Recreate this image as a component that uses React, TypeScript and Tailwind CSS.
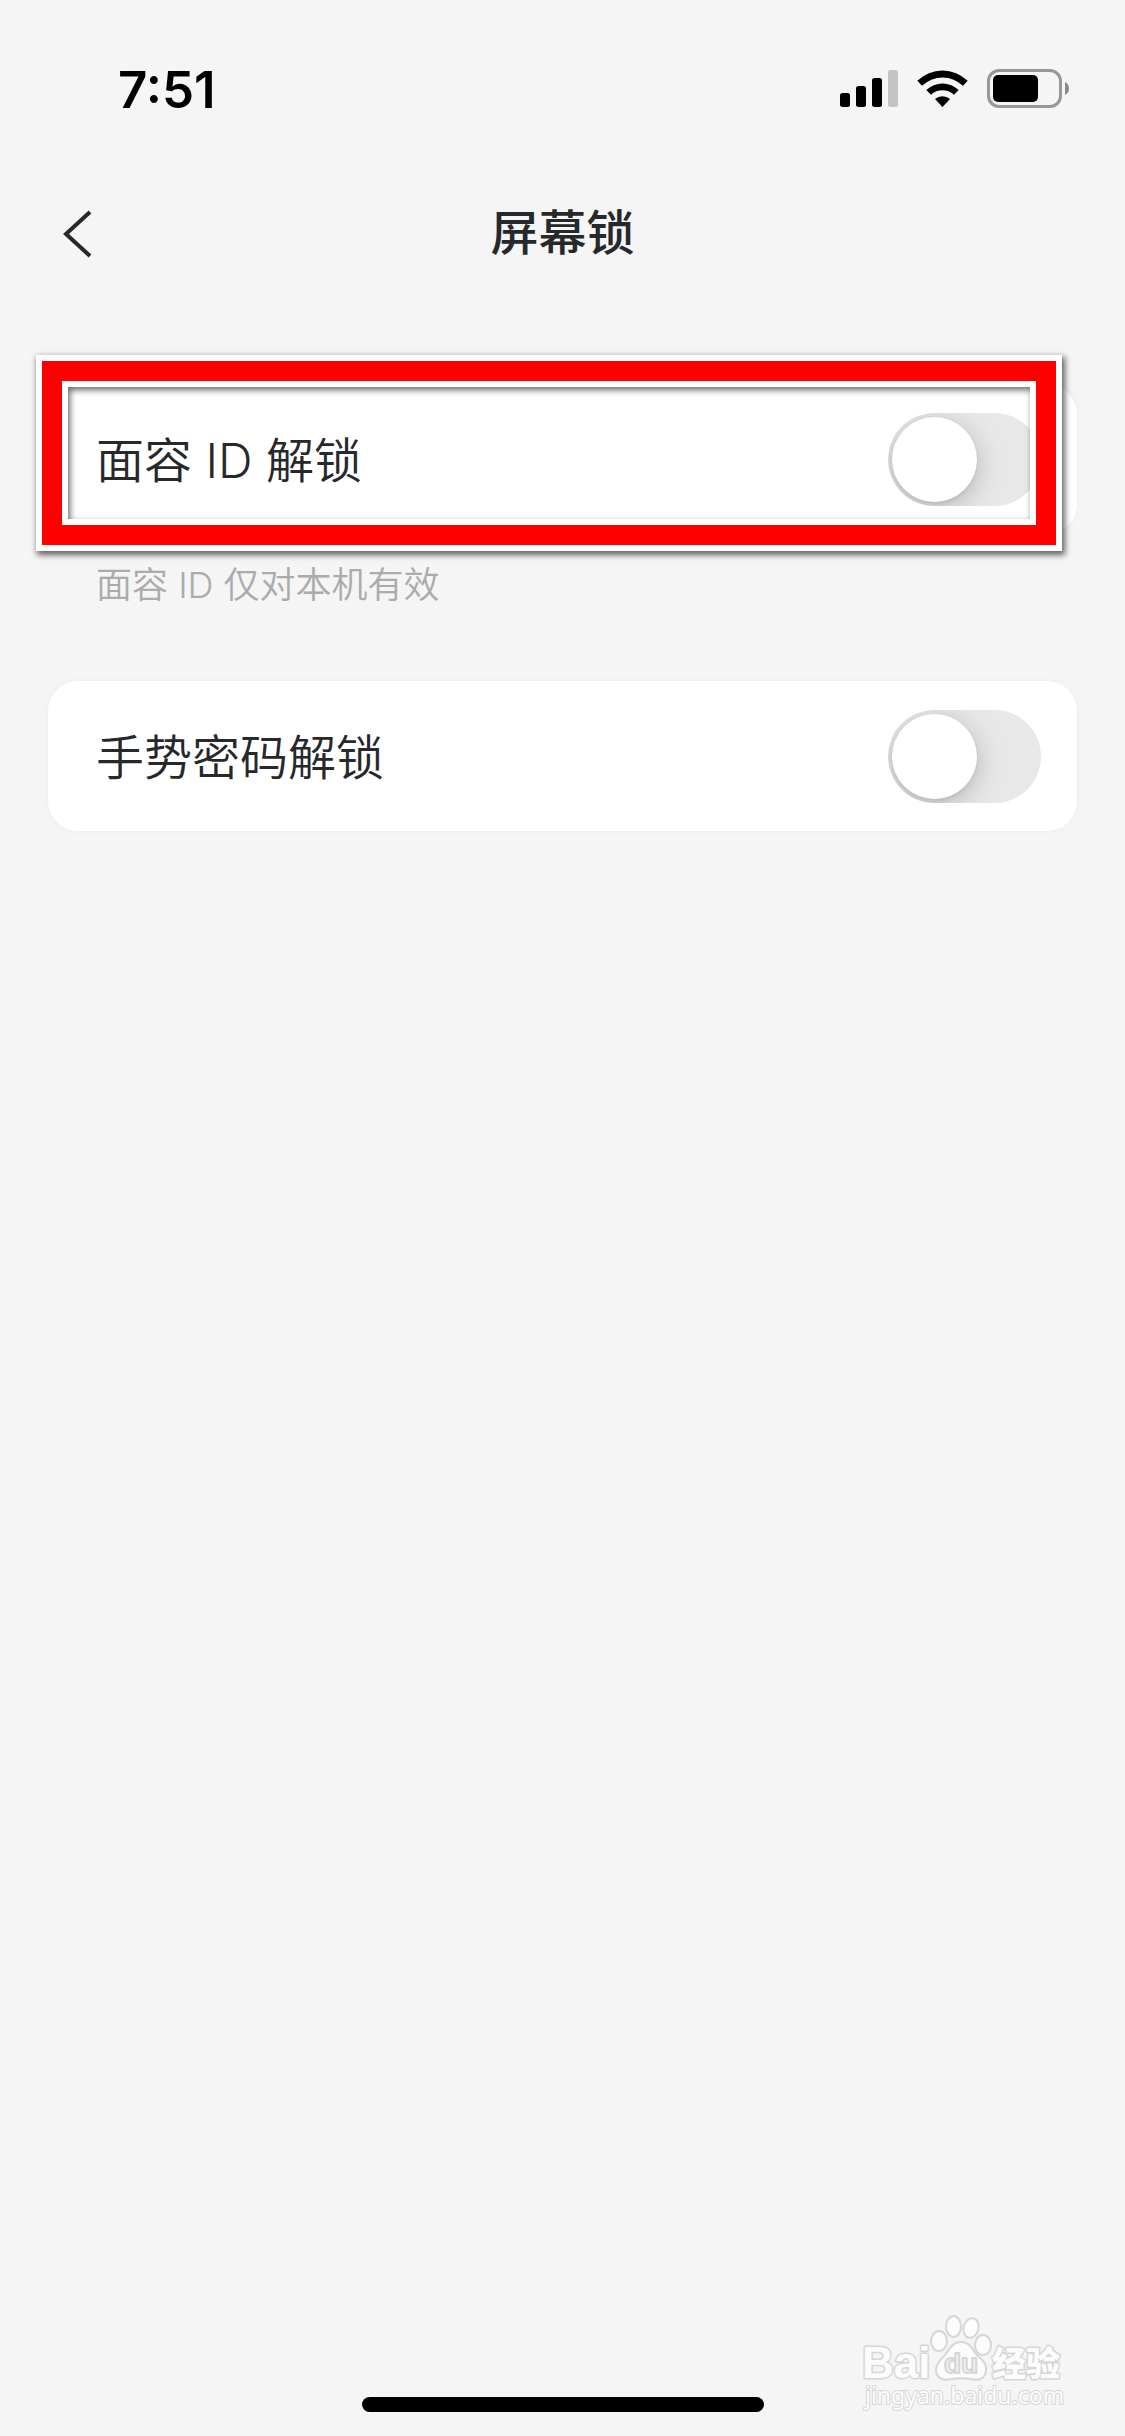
import { useState } from "react";

function StatusBar() {
  return (
    <div className="flex h-[178px] items-center justify-between pr-[55px] pl-[118px]">
      <span className="text-[51px] leading-none font-semibold text-black">
        7:51
      </span>
      <div className="flex items-center gap-[19px]">
        <svg width="58" height="38" viewBox="0 0 58 38" aria-hidden="true">
          <rect x="0" y="23" width="10" height="14" rx="2.5" />
          <rect x="16" y="16" width="10" height="21" rx="2.5" />
          <rect x="32" y="8" width="10" height="29" rx="2.5" />
          <rect x="48" y="0" width="10" height="37" rx="2.5" fill="#c4c4c4" />
        </svg>
        <svg width="51" height="38" viewBox="0 0 51 38" aria-hidden="true">
          <path d="M0.3 10.8 A36 36 0 0 1 50.7 10.8 L46 15.8 A29.5 29.5 0 0 0 5 15.8 Z" />
          <path d="M9.3 20 A23.5 23.5 0 0 1 41.7 20 L37 24.8 A17 17 0 0 0 14 24.8 Z" />
          <path d="M18 29 A11.5 11.5 0 0 1 33 29 L25.5 37 Z" />
        </svg>
        <svg width="83" height="40" viewBox="0 0 83 40" aria-hidden="true">
          <rect
            x="1.5"
            y="1.5"
            width="72"
            height="36"
            rx="10.5"
            fill="none"
            stroke="#979797"
            strokeWidth="3"
          />
          <rect x="6" y="6" width="45" height="27" rx="5" />
          <path d="M78 13 Q82 15 82 19.5 Q82 24 78 26 Z" fill="#8a8a8a" />
        </svg>
      </div>
    </div>
  );
}

function SwitchRow({ id, label }: { id: string; label: string }) {
  const [on, setOn] = useState(false);

  return (
    <div className="flex h-[150px] items-center justify-between rounded-[30px] bg-white pr-9 pl-12 shadow-[0_0_6px_rgba(0,0,0,0.04)]">
      <label htmlFor={id} className="pt-1 text-5xl font-[350] text-[#26282c]">
        {label}
      </label>
      <input
        id={id}
        type="checkbox"
        role="switch"
        checked={on}
        onChange={() => setOn(!on)}
        className="h-[93px] w-[153px] cursor-pointer appearance-none overflow-hidden rounded-full bg-[#e8e8e8] p-1 before:block before:size-[85px] before:rounded-full before:bg-white before:shadow-[0_6px_28px_rgba(0,0,0,0.22),0_2px_4px_rgba(0,0,0,0.08)] checked:bg-green-500 checked:before:translate-x-[60px]"
      />
    </div>
  );
}

function Watermark() {
  return (
    <svg
      className="pointer-events-none absolute right-[50px] bottom-[21px]"
      width="220"
      height="110"
      viewBox="0 0 220 110"
      fill="#fcfcfc"
      stroke="#d6d6d6"
      strokeWidth="2"
      strokeLinejoin="round"
    >
      <ellipse cx="84" cy="36" rx="8" ry="10" />
      <ellipse cx="98.5" cy="21.5" rx="7.5" ry="10.5" />
      <ellipse cx="116" cy="23" rx="7.5" ry="10" transform="rotate(15 116 23)" />
      <ellipse cx="128" cy="40" rx="8" ry="10" />
      <path d="M106 37 C115 37 117 44 122 50 C127 55 132 58 131 66 C130 74 123 76 116 74 C109 73 103 73 96 74 C88 76 81 73 81 65 C81 58 86 55 90 50 C95 44 97 37 106 37 Z" />
      <g className="font-['Liberation_Sans',sans-serif] font-bold">
        <text x="7" y="73" fontSize="44" strokeWidth="3" className="[paint-order:stroke]">
          Bai
        </text>
        <text x="89" y="68" fontSize="28" fill="#f2f2f2">
          du
        </text>
      </g>
      <text
        x="137"
        y="71"
        fontSize="34"
        strokeWidth="3"
        className="font-['Noto_Sans_CJK_SC',sans-serif] font-black [paint-order:stroke]"
      >
        经验
      </text>
      <text
        x="10"
        y="99"
        fontSize="23"
        className="font-['Noto_Sans',sans-serif] [paint-order:stroke]"
      >
        jingyan.baidu.com
      </text>
    </svg>
  );
}

export default function App() {
  return (
    <div className="relative flex min-h-screen flex-col bg-[#f5f5f5] font-['Inter','Noto_Sans_CJK_SC',sans-serif]">
      <StatusBar />

      <header className="grid h-[110px] grid-cols-[1fr_auto_1fr] items-center px-12">
        <button type="button" aria-label="返回" className="w-fit px-3">
          <svg width="32" height="50" viewBox="0 0 32 50" fill="none">
            <path d="M30 4 L6 26 L30 48" stroke="#26282c" strokeWidth="4" />
          </svg>
        </button>
        <h1 className="text-5xl font-medium text-[#26282c]">屏幕锁</h1>
      </header>

      <main className="px-12 pt-24">
        <section className="relative">
          <SwitchRow id="face-id" label="面容 ID 解锁" />
          <div className="pointer-events-none absolute -top-[29px] right-[15px] -bottom-[17px] -left-3 border-6 border-white shadow-[2px_3px_6px_1px_rgba(0,0,0,0.6)]">
            <div className="h-full border-20 border-[#ff0000]">
              <div className="h-full border-6 border-white">
                <div className="h-full shadow-[inset_2px_3px_6px_rgba(0,0,0,0.6)]" />
              </div>
            </div>
          </div>
        </section>
        <p className="mt-6 pl-12 text-4xl leading-[54px] font-[350] text-[#aaabad]">
          面容 ID 仅对本机有效
        </p>

        <section className="mt-[69px]">
          <SwitchRow id="gesture" label="手势密码解锁" />
        </section>
      </main>

      <footer className="mt-auto flex justify-center pb-6">
        <div className="h-[15px] w-[402px] rounded-full bg-black" />
      </footer>

      <Watermark />
    </div>
  );
}
